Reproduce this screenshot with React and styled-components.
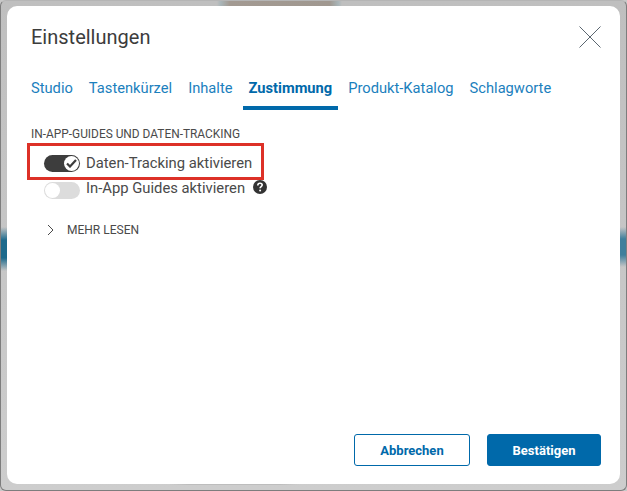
import React from 'react';
import styled, { createGlobalStyle } from 'styled-components';

const GlobalStyle = createGlobalStyle`
  html, body {
    margin: 0;
    padding: 0;
    height: 100%;
  }
  body {
    font-family: Roboto, "Liberation Sans", sans-serif;
    background: #c8c8c8;
  }
`

// blurred page behind the modal, only its edges show
const Backdrop = styled.div`
  width: 627px;
  height: 491px;
  box-sizing: border-box;
  padding: 5px 6px 6px 6px;
  border: 1px solid #7d7d7d;
  border-top-color: #b5b5b5;
  border-radius: 6px;
  overflow: hidden;
  background-color: #c8c8c8;
  background-repeat: no-repeat;
  background-image:
    linear-gradient(to right, transparent, #a9b5b8 3%, #a39a92 10%, #a09890 90%, #a9b5b8 97%, transparent),
    linear-gradient(to bottom, transparent, #1d6a8c 30%, #1d6a8c 70%, transparent),
    linear-gradient(to bottom, transparent, #3f7f9c 30%, #3f7f9c 70%, transparent),
    linear-gradient(to right, transparent, #bdbdbd 15%, #bdbdbd 85%, transparent),
    linear-gradient(to bottom, #bfbfbf, #cdcdcd);
  background-size: 125px 6px, 6px 44px, 6px 40px, 130px 6px, 100% 100%;
  background-position: 216px 0, 0 226px, 619px 226px, 168px 478px, 0 0;
`

const Dialog = styled.div`
  height: 100%;
  box-sizing: border-box;
  display: flex;
  flex-direction: column;
  background: #fff;
  border-radius: 10px;
  padding: 0 19px 18px 24px;
`

const Header = styled.div`
  display: flex;
  align-items: center;
  justify-content: space-between;
  height: 61px;
`

const Title = styled.h1`
  margin: 0;
  font-size: 20px;
  font-weight: 400;
  color: #3c3c3c;
`

const CloseButton = styled.button`
  border: none;
  background: none;
  padding: 0;
  display: flex;
  width: 22px;
  height: 22px;
`

const Tabs = styled.div`
  display: flex;
  gap: 4px;
  height: 43px;
  margin-left: -6px;
`

const Tab = styled.div`
  padding: 0 6px;
  height: 43px;
  box-sizing: border-box;
  line-height: 42px;
  font-size: 14.7px;
  color: ${p => (p.$active ? '#0069aa' : '#1b80bd')};
  font-weight: ${p => (p.$active ? 700 : 400)};
  border-bottom: ${p => (p.$active ? '4px solid #0069aa' : 'none')};
`

const Content = styled.div`
  flex: 1;
  padding-top: 18px;
`

const SectionLabel = styled.div`
  font-size: 11.9px;
  line-height: 13px;
  color: #4a4a4a;
`

const HighlightRow = styled.div`
  display: flex;
  align-items: center;
  gap: 6px;
  width: 237px;
  height: 37px;
  box-sizing: border-box;
  margin: 2px 0 0 -4px;
  padding: 4px 0 0 14px;
  border: 3px solid #dd3127;
`

const PlainRow = styled.div`
  display: flex;
  align-items: center;
  gap: 6px;
  height: 17px;
  margin: 2px 0 0 13px;
`

const SwitchTrack = styled.div`
  position: relative;
  width: 36px;
  height: 17px;
  border-radius: 9px;
  background: ${p => (p.$on ? '#3d3d3d' : '#dcdcdc')};
`

const SwitchKnob = styled.div`
  position: absolute;
  top: 1px;
  left: ${p => (p.$on ? '20px' : '1px')};
  width: 15px;
  height: 15px;
  border-radius: 50%;
  background: #fff;
  display: flex;
  align-items: center;
  justify-content: center;
`

const RowLabel = styled.span`
  font-size: 14.8px;
  line-height: 18px;
  padding-bottom: ${p => (p.$raised ? '5px' : '2px')};
  color: #4a4a4a;
`

const HelpIcon = styled.span`
  display: flex;
  margin: 0 0 7px 2px;
`

const ReadMore = styled.div`
  display: flex;
  align-items: center;
  gap: 13px;
  margin: 24px 0 0 16px;
  font-size: 12px;
  color: #4a4a4a;
`

const Footer = styled.div`
  display: flex;
  justify-content: flex-end;
  gap: 17px;
`

const Button = styled.button`
  width: ${p => (p.$primary ? '114px' : '116px')};
  height: 32px;
  box-sizing: border-box;
  border-radius: 3px;
  border: 1px solid #0069aa;
  font-family: inherit;
  font-size: 13px;
  font-weight: 700;
  color: ${p => (p.$primary ? '#fff' : '#0069aa')};
  background: ${p => (p.$primary ? '#0069aa' : '#fff')};
`

export default function App() {
  return (
    <>
      <GlobalStyle />
      <Backdrop>
        <Dialog>
          <Header>
            <Title>Einstellungen</Title>
            <CloseButton aria-label="Schließen">
              <svg width="22" height="22" viewBox="0 0 22 22" fill="none" stroke="#5b6670" strokeWidth="1">
                <path d="M0.5 0.5 L21.5 21.5 M21.5 0.5 L0.5 21.5" />
              </svg>
            </CloseButton>
          </Header>
          <Tabs>
            <Tab>Studio</Tab>
            <Tab>Tastenkürzel</Tab>
            <Tab>Inhalte</Tab>
            <Tab $active>Zustimmung</Tab>
            <Tab>Produkt-Katalog</Tab>
            <Tab>Schlagworte</Tab>
          </Tabs>
          <Content>
            <SectionLabel>IN-APP-GUIDES UND DATEN-TRACKING</SectionLabel>
            <HighlightRow>
              <SwitchTrack $on>
                <SwitchKnob $on>
                  <svg width="11" height="9" viewBox="0 0 11 9" fill="none" stroke="#3d3d3d" strokeWidth="2.2">
                    <path d="M1 4.5 L4 7.5 L10 1" />
                  </svg>
                </SwitchKnob>
              </SwitchTrack>
              <RowLabel>Daten-Tracking aktivieren</RowLabel>
            </HighlightRow>
            <PlainRow>
              <SwitchTrack>
                <SwitchKnob />
              </SwitchTrack>
              <RowLabel $raised>In-App Guides aktivieren</RowLabel>
              <HelpIcon>
                <svg width="14" height="14" viewBox="0 0 14 14">
                  <circle cx="7" cy="7" r="7" fill="#333" />
                  <path d="M4.8 5.4 C4.8 4 5.8 3.2 7 3.2 C8.3 3.2 9.2 4 9.2 5.1 C9.2 6.5 7.1 6.6 7.1 8.2" fill="none" stroke="#fff" strokeWidth="1.6" />
                  <circle cx="7.1" cy="10.4" r="1" fill="#fff" />
                </svg>
              </HelpIcon>
            </PlainRow>
            <ReadMore>
              <svg width="7" height="12" viewBox="0 0 7 12" fill="none" stroke="#4a4a4a" strokeWidth="1">
                <path d="M1 1 L6 6 L1 11" />
              </svg>
              MEHR LESEN
            </ReadMore>
          </Content>
          <Footer>
            <Button>Abbrechen</Button>
            <Button $primary>Bestätigen</Button>
          </Footer>
        </Dialog>
      </Backdrop>
    </>
  )
}
